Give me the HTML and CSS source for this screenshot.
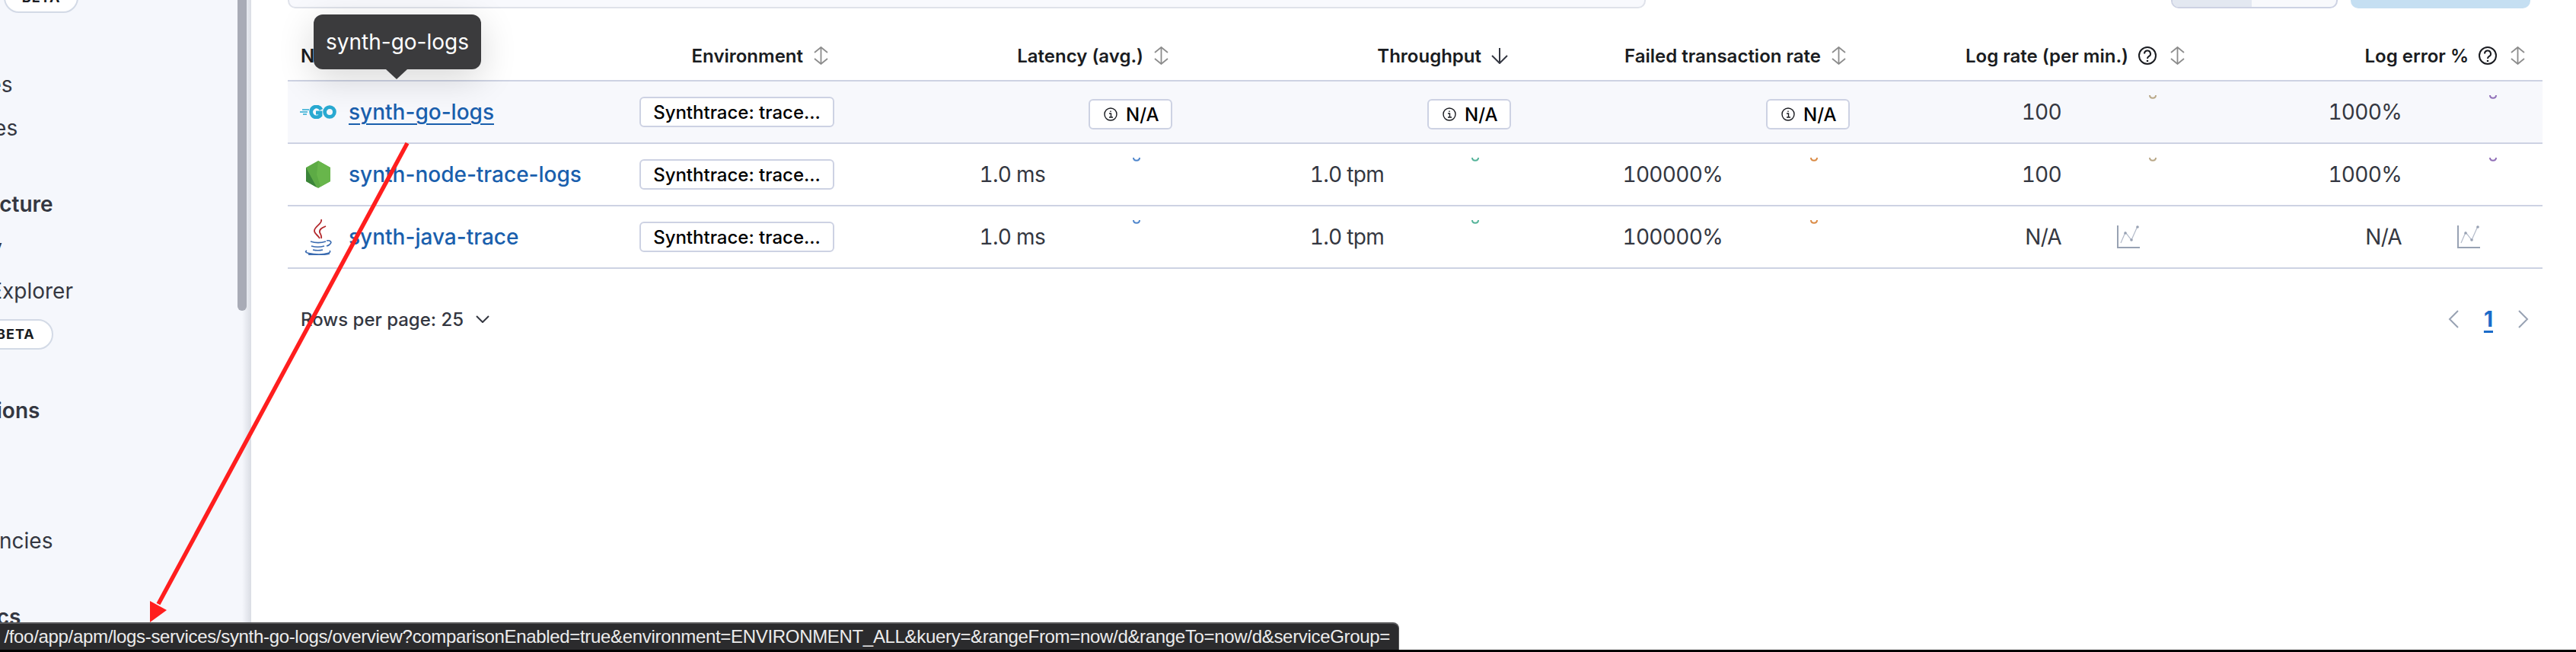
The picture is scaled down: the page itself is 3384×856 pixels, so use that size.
FILE: index.html
```html
<!DOCTYPE html>
<html lang="en">
<head>
    <meta charset="UTF-8">
    <title>Services</title>
    <link rel="stylesheet" href="styles.css">
</head>
<body>
    <div class="app">
        <nav class="sidebar">
            <div class="nav-item">Explorer <span class="beta">BETA</span></div>
            <div class="nav-item">Stream</div>
            <div class="nav-item">Anomalies</div>
            <div class="nav-item">Categories</div>
            <div class="nav-item nav-group">Infrastructure</div>
            <div class="nav-item">Inventory</div>
            <div class="nav-item">Metrics Explorer</div>
            <div class="nav-item">Hosts <span class="beta">BETA</span></div>
            <div class="nav-item nav-group">Applications</div>
            <div class="nav-item">Services</div>
            <div class="nav-item">Traces</div>
            <div class="nav-item">Dependencies</div>
            <div class="nav-item nav-group">Synthetics</div>
            <div class="scrollbar"></div>
        </nav>

        <main class="main">
            <div class="toolbar">
                <div class="search"></div>
                <div class="toggle"><span></span></div>
                <div class="refresh"></div>
            </div>

            <div class="row head">
                <div class="th th-name">Name</div>
                <div class="th">Environment <svg class="sort" viewBox="0 0 21 24"><path d="M2 8 10.5 1 19 8M2 16l8.500 7 8.500-7M10.500 1v22"/></svg></div>
                <div class="th">Latency (avg.) <svg class="sort" viewBox="0 0 21 24"><path d="M2 8 10.5 1 19 8M2 16l8.500 7 8.500-7M10.500 1v22"/></svg></div>
                <div class="th">Throughput <svg class="sort-down" viewBox="0 0 22 22"><path d="M11 1v20M1 11l10 10 10-10"/></svg></div>
                <div class="th">Failed transaction rate <svg class="sort" viewBox="0 0 21 24"><path d="M2 8 10.5 1 19 8M2 16l8.500 7 8.500-7M10.500 1v22"/></svg></div>
                <div class="th">Log rate (per min.) <svg class="help" viewBox="0 0 24 24"><circle cx="12" cy="12" r="11"/><path d="M8 9.500a4 4 0 1 1 6 3.400c-1.500.900-2 1.600-2 3.100"/><circle class="dot" cx="12" cy="19" r="1.300"/></svg> <svg class="sort" viewBox="0 0 21 24"><path d="M2 8 10.5 1 19 8M2 16l8.500 7 8.500-7M10.500 1v22"/></svg></div>
                <div class="th">Log error % <svg class="help" viewBox="0 0 24 24"><circle cx="12" cy="12" r="11"/><path d="M8 9.500a4 4 0 1 1 6 3.400c-1.500.900-2 1.600-2 3.100"/><circle class="dot" cx="12" cy="19" r="1.300"/></svg> <svg class="sort" viewBox="0 0 21 24"><path d="M2 8 10.5 1 19 8M2 16l8.500 7 8.500-7M10.500 1v22"/></svg></div>
            </div>

            <div class="row hovered">
                <div class="name">
                    <span class="logo">
                        <svg class="logo-go" viewBox="0 0 48 18">
                            <path d="M3 6h9M0 9h10M4 12h5" stroke-width="1.300"/>
                            <path d="M28 6a7 7 0 1 0-1 7.500V10h-6" stroke-width="4.800"/>
                            <circle cx="39" cy="9" r="6.400" stroke-width="4.800"/>
                        </svg>
                    </span>
                    <a class="link link-active" href="#">synth-go-logs</a>
                </div>
                <div class="env"><span class="badge">Synthtrace: trace...</span></div>
                <div class="cell"><span class="na"><svg class="info" viewBox="0 0 18 18"><circle cx="9" cy="9" r="8"/><path d="M7 8h2.500v5M7 13h5M9 4.500v1.500"/></svg>N/A</span></div>
                <div class="cell"><span class="na"><svg class="info" viewBox="0 0 18 18"><circle cx="9" cy="9" r="8"/><path d="M7 8h2.500v5M7 13h5M9 4.500v1.500"/></svg>N/A</span></div>
                <div class="cell"><span class="na"><svg class="info" viewBox="0 0 18 18"><circle cx="9" cy="9" r="8"/><path d="M7 8h2.500v5M7 13h5M9 4.500v1.500"/></svg>N/A</span></div>
                <div class="cell"><span>100</span><span class="spark"><svg class="tick tick-tan" viewBox="0 0 10 6"><path d="M1 1c0 5 8 5 8 0"/></svg></span></div>
                <div class="cell"><span>1000%</span><span class="spark"><svg class="tick tick-purple" viewBox="0 0 10 6"><path d="M1 1c0 5 8 5 8 0"/></svg></span></div>
            </div>

            <div class="row">
                <div class="name">
                    <span class="logo">
                        <svg class="logo-node" viewBox="0 0 32 36">
                            <polygon points="16,0 32,9 32,27 16,36 0,27 0,9" fill="#5dab45"/>
                            <polygon points="16,0 32,9 32,27 19,34 14,18" fill="#68b64b"/>
                            <polygon points="0,9 0,27 14,35" fill="#3b8439"/>
                        </svg>
                    </span>
                    <a class="link" href="#">synth-node-trace-logs</a>
                </div>
                <div class="env"><span class="badge">Synthtrace: trace...</span></div>
                <div class="cell"><span>1.0 ms</span><span class="spark"><svg class="tick tick-blue" viewBox="0 0 10 6"><path d="M1 1c0 5 8 5 8 0"/></svg></span></div>
                <div class="cell"><span>1.0 tpm</span><span class="spark"><svg class="tick tick-green" viewBox="0 0 10 6"><path d="M1 1c0 5 8 5 8 0"/></svg></span></div>
                <div class="cell"><span>100000%</span><span class="spark"><svg class="tick tick-orange" viewBox="0 0 10 6"><path d="M1 1c0 5 8 5 8 0"/></svg></span></div>
                <div class="cell"><span>100</span><span class="spark"><svg class="tick tick-tan" viewBox="0 0 10 6"><path d="M1 1c0 5 8 5 8 0"/></svg></span></div>
                <div class="cell"><span>1000%</span><span class="spark"><svg class="tick tick-purple" viewBox="0 0 10 6"><path d="M1 1c0 5 8 5 8 0"/></svg></span></div>
            </div>

            <div class="row">
                <div class="name">
                    <span class="logo">
                        <svg class="logo-java" viewBox="0 0 37 47">
                            <path class="steam" d="M22 0c2 6-9 9-9 15 0 4 5 6 7 10M28 9c-5 2-9 4-8 8 .5 2 3 4 2 8"/>
                            <path class="cup" d="M8 29c6 2 14 2 20 0M9 35c5 1.500 12 1.500 17 0M11 40c4 1 9 1 13 0M29 28c5-1 7 2 5 4-1 1.500-3 2.500-5 3M3 41c-6 3 8 5 16 5 9 0 17-2 14-5M5 46c8 1 20 1 28-1"/>
                        </svg>
                    </span>
                    <a class="link" href="#">synth-java-trace</a>
                </div>
                <div class="env"><span class="badge">Synthtrace: trace...</span></div>
                <div class="cell"><span>1.0 ms</span><span class="spark"><svg class="tick tick-blue" viewBox="0 0 10 6"><path d="M1 1c0 5 8 5 8 0"/></svg></span></div>
                <div class="cell"><span>1.0 tpm</span><span class="spark"><svg class="tick tick-green" viewBox="0 0 10 6"><path d="M1 1c0 5 8 5 8 0"/></svg></span></div>
                <div class="cell"><span>100000%</span><span class="spark"><svg class="tick tick-orange" viewBox="0 0 10 6"><path d="M1 1c0 5 8 5 8 0"/></svg></span></div>
                <div class="cell"><span>N/A</span><span class="spark spark-empty"><svg class="no-data" viewBox="0 0 30 30"><path class="axis" d="M1 0v29h29"/><path class="trend" d="M5 23 11 9l8 10 8-18"/><circle cx="11" cy="10" r="1.800"/><circle cx="19" cy="19" r="1.800"/><circle cx="27" cy="2" r="1.800"/></svg></span></div>
                <div class="cell"><span>N/A</span><span class="spark spark-empty"><svg class="no-data" viewBox="0 0 30 30"><path class="axis" d="M1 0v29h29"/><path class="trend" d="M5 23 11 9l8 10 8-18"/><circle cx="11" cy="10" r="1.800"/><circle cx="19" cy="19" r="1.800"/><circle cx="27" cy="2" r="1.800"/></svg></span></div>
            </div>

            <div class="table-footer">
                <div class="per-page">Rows per page: 25 <svg class="chevron" viewBox="0 0 18 10"><path d="M1 1l8 8 8-8"/></svg></div>
                <div class="pager">
                    <svg class="page-arrow" viewBox="0 0 14 24"><path d="M13 1 2 12l11 11"/></svg>
                    <a class="page-num" href="#">1</a>
                    <svg class="page-arrow" viewBox="0 0 14 24"><path d="M1 1l11 11L1 23"/></svg>
                </div>
            </div>
        </main>
    </div>

    <div class="tooltip">synth-go-logs</div>

    <!-- red annotation arrow drawn over the screenshot -->
    <svg class="annotation" viewBox="0 0 3384 856">
        <path d="M535 188 208 793" stroke="#ff1e1e" stroke-width="5.500" fill="none"/>
        <polygon points="197,817 197,789 219,801" fill="#ff1e1e"/>
    </svg>

    <div class="status-line"></div>
    <div class="status-bubble">/foo/app/apm/logs-services/synth-go-logs/overview?comparisonEnabled=true&amp;environment=ENVIRONMENT_ALL&amp;kuery=&amp;rangeFrom=now/d&amp;rangeTo=now/d&amp;serviceGroup=</div>
</body>
</html>
```

FILE: styles.css
```css
* {
    box-sizing: border-box;
}
body {
    font-family: Inter, "Noto Sans", sans-serif;
    font-size: 28px;
    color: #343741;
    background: #fff;
    margin: 0;
    height: 856px;
    overflow: hidden;
    position: relative;
}
.app {
    display: flex;
    height: 856px;
}

/* sidebar */
.sidebar {
    flex: 0 0 330px;
    position: relative;
    padding-left: 0;
    overflow: hidden;
    background: linear-gradient(to right, #f5f7fc 318px, #dcdfe6 329px);
}
.nav-item {
    height: 57px;
    margin-left: -121px;
    display: flex;
    align-items: center;
    gap: 16px;
    white-space: nowrap;
    position: relative;
    top: -32px;
}
.nav-group {
    font-weight: 600;
    margin-top: 43px;
    margin-left: -117px;
}
.beta {
    font-size: 18px;
    font-weight: 700;
    letter-spacing: 1px;
    color: #1a1c21;
    background: #fff;
    border: 2px solid #d3dae6;
    border-radius: 20px;
    height: 40px;
    padding: 0 22px;
    display: flex;
    align-items: center;
}
.scrollbar {
    position: absolute;
    left: 312px;
    top: 0;
    width: 12px;
    height: 408px;
    background: #a8abb6;
    border-radius: 0 0 6px 6px;
}

/* main */
.main {
    flex: 1;
    padding: 0 44px 0 48px;
    min-width: 0;
}
.toolbar {
    height: 11px;
    display: flex;
    align-items: stretch;
    padding-right: 16px;
}
.search {
    width: 1784px;
    margin-right: auto;
    background: #f8f9fd;
    border: 2px solid #dfe2ea;
    border-top: none;
    border-radius: 0 0 10px 10px;
}
.toggle {
    width: 219px;
    margin-right: 17px;
    background: #f8f9fc;
    border: 2px solid #cdd2e3;
    border-top: none;
    border-radius: 0 0 10px 10px;
    overflow: hidden;
}
.toggle span {
    display: block;
    width: 104px;
    height: 100%;
    background: #e3e8f1;
}
.refresh {
    width: 236px;
    background: #c5dff2;
    border-radius: 0 0 10px 10px;
}

/* table */
.row {
    display: grid;
    grid-template-columns: 452px 273px 447px 445px 445px 445px 447px;
    padding-right: 8px;
    height: 82px;
    border-bottom: 2px solid #cdd2e3;
}
.head {
    height: 96px;
    align-items: end;
    padding-bottom: 16px;
}
.hovered {
    background: #f7f8fc;
}
.th {
    display: flex;
    justify-content: flex-end;
    align-items: center;
    gap: 13px;
    height: 32px;
    padding-right: 14px;
    font-size: 24px;
    font-weight: 600;
    color: #1a1c21;
    white-space: nowrap;
}
.th-name {
    justify-content: flex-start;
    padding-left: 17px;
}
.sort {
    width: 21px;
    height: 24px;
    fill: none;
    stroke: #8c8c8c;
    stroke-width: 1.800;
}
.sort-down {
    width: 22px;
    height: 22px;
    fill: none;
    stroke: #343741;
    stroke-width: 2;
}
.help {
    width: 24px;
    height: 24px;
    fill: none;
    stroke: #1a1c21;
    stroke-width: 2;
}
.help .dot {
    fill: #1a1c21;
    stroke: none;
}
.help + .sort {
    margin-left: 4px;
}
.name {
    display: flex;
    align-items: center;
    gap: 16px;
    padding-left: 16px;
}
.logo {
    width: 48px;
    display: flex;
    justify-content: center;
    align-items: center;
}
.logo-go {
    width: 48px;
    height: 18px;
    fill: none;
    stroke: #29a9d1;
}
.logo-node {
    width: 32px;
    height: 36px;
}
.logo-java {
    width: 37px;
    height: 47px;
    fill: none;
}
.steam {
    stroke: #b3282c;
    stroke-width: 1.800;
}
.cup {
    stroke: #3a6bb0;
    stroke-width: 1.600;
}
.link {
    color: #1a5fad;
    font-weight: 500;
    text-decoration: none;
    white-space: nowrap;
}
.link-active {
    text-decoration: underline;
    text-decoration-thickness: 2px;
    text-underline-offset: 5px;
}
.env {
    display: flex;
    align-items: center;
    padding-left: 10px;
}
.badge {
    width: 256px;
    height: 40px;
    display: flex;
    align-items: center;
    justify-content: center;
    font-size: 24px;
    font-weight: 500;
    color: #000;
    background: #fff;
    border: 2px solid #cdd2e3;
    border-radius: 6px;
    white-space: nowrap;
}
.cell {
    display: flex;
    justify-content: flex-end;
    align-items: center;
    font-variant-numeric: tabular-nums;
    letter-spacing: -0.7px;
}
.spark {
    width: 177px;
    align-self: flex-start;
    padding: 13px 0 0 115px;
    line-height: 0;
}
.spark-empty {
    align-self: center;
    padding: 0 0 0 73px;
}
.tick {
    width: 10px;
    height: 6px;
    fill: none;
    stroke-width: 2;
}
.tick-blue { stroke: #4f86cc; }
.tick-green { stroke: #54b399; }
.tick-orange { stroke: #da8b45; }
.tick-tan { stroke: #b9a888; }
.tick-purple { stroke: #9170b8; }
.no-data {
    width: 30px;
    height: 30px;
    fill: #98a2b3;
}
.no-data .axis {
    fill: none;
    stroke: #98a2b3;
    stroke-width: 2;
}
.no-data .trend {
    fill: none;
    stroke: #b4bbca;
    stroke-width: 1.200;
}
.na {
    display: flex;
    align-items: center;
    gap: 11px;
    width: 110px;
    height: 40px;
    margin: 6px 10px 0 0;
    padding-left: 18px;
    font-size: 24px;
    font-weight: 500;
    letter-spacing: 0;
    color: #000;
    background: #fff;
    border: 2px solid #cdd2e3;
    border-radius: 6px;
}
.info {
    width: 18px;
    height: 18px;
    flex: none;
    fill: none;
    stroke: #1a1c21;
    stroke-width: 1.400;
}

/* footer of the table */
.table-footer {
    display: flex;
    justify-content: space-between;
    align-items: center;
    height: 60px;
    margin-top: 36px;
    padding: 0 18px 0 17px;
}
.per-page {
    display: flex;
    align-items: center;
    gap: 16px;
    font-size: 24px;
    font-weight: 500;
}
.chevron {
    width: 18px;
    height: 10px;
    fill: none;
    stroke: #343741;
    stroke-width: 2;
}
.pager {
    display: flex;
    align-items: center;
    gap: 33px;
}
.page-arrow {
    width: 14px;
    height: 24px;
    fill: none;
    stroke: #98a2b3;
    stroke-width: 2;
}
.page-num {
    color: #1b6bc9;
    font-weight: 700;
    text-decoration: underline;
    text-decoration-thickness: 3px;
    text-underline-offset: 5px;
}

/* things lying over the page */
.tooltip {
    position: absolute;
    left: 412px;
    top: 19px;
    width: 220px;
    height: 72px;
    display: flex;
    align-items: center;
    justify-content: center;
    color: #fff;
    background: #3b3b3d;
    border-radius: 12px;
    box-shadow: 0 12px 48px rgba(0, 0, 0, 0.16);
}
.tooltip::after {
    content: "";
    position: absolute;
    left: 95px;
    top: 72px;
    border-left: 14px solid transparent;
    border-right: 14px solid transparent;
    border-top: 13px solid #3b3b3d;
}
.annotation {
    position: absolute;
    left: 0;
    top: 0;
    width: 3384px;
    height: 856px;
}
.status-line {
    position: absolute;
    left: 0;
    right: 0;
    bottom: 0;
    height: 3px;
    background: #000;
}
.status-bubble {
    position: absolute;
    left: 0;
    top: 817px;
    width: 1838px;
    height: 36px;
    display: flex;
    align-items: center;
    justify-content: flex-end;
    padding-right: 11px;
    overflow: hidden;
    white-space: nowrap;
    font-family: "Liberation Sans", sans-serif;
    font-size: 24px;
    letter-spacing: -0.32px;
    color: #ececec;
    background: #2b2b2d;
    border-top: 2px solid #5a5a5c;
    border-right: 1px solid #5a5a5c;
    border-radius: 0 8px 0 0;
}
```
